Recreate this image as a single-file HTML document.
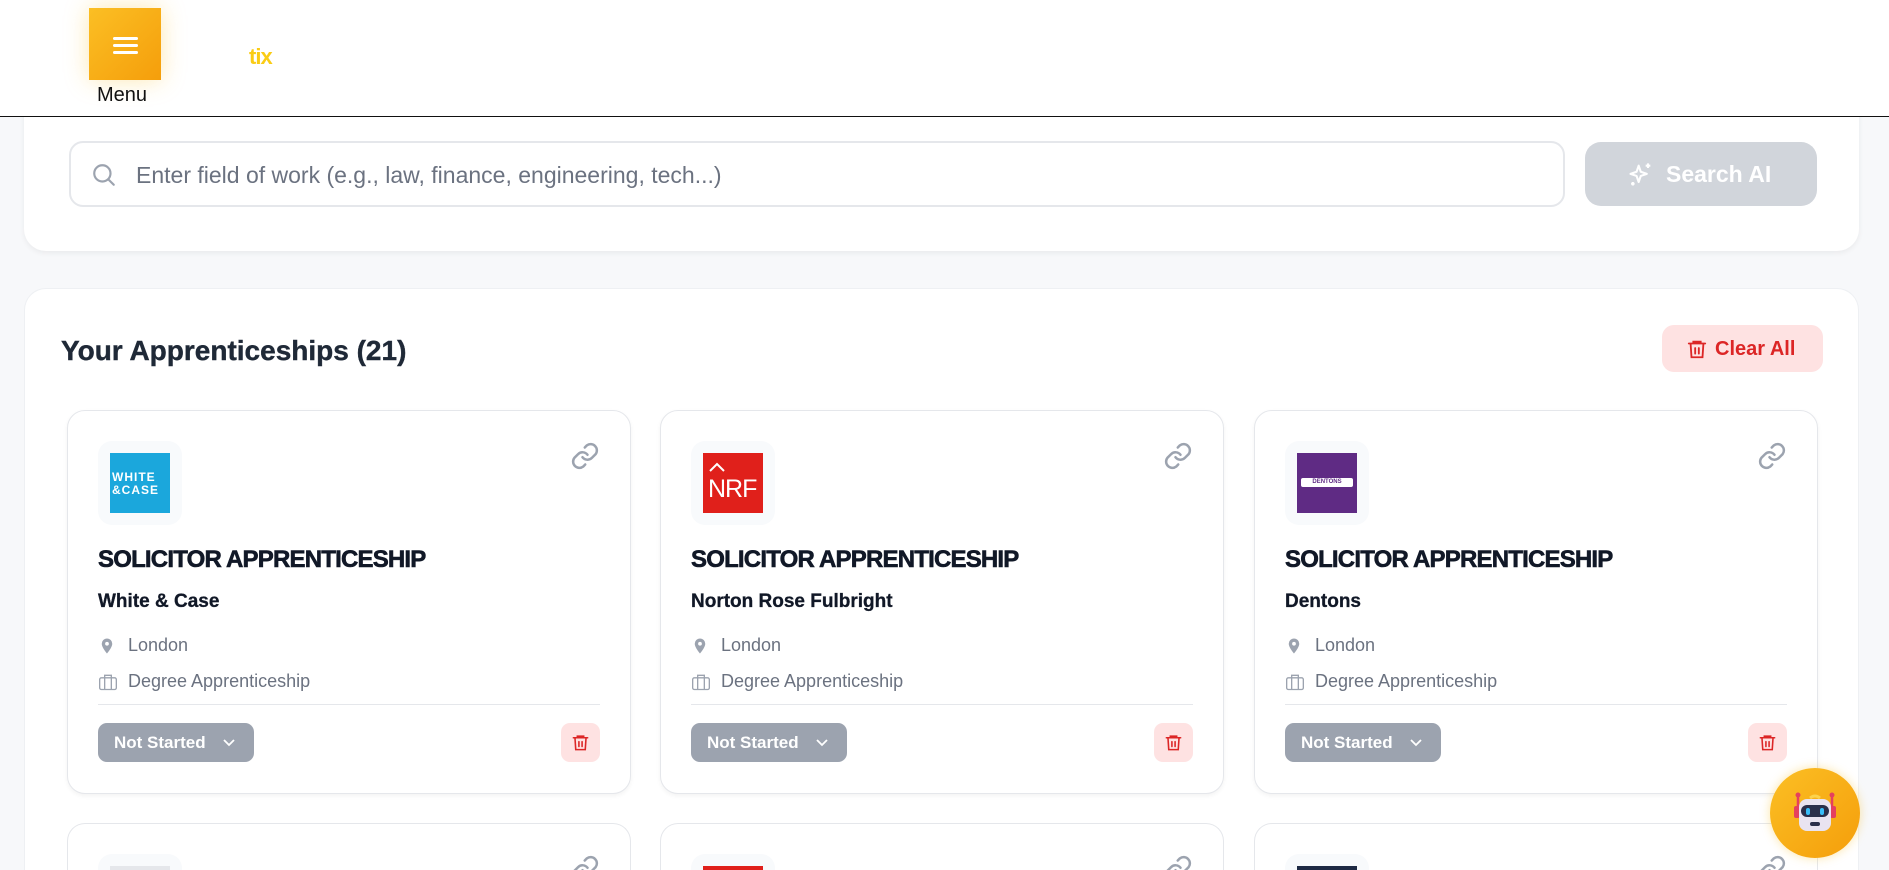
<!DOCTYPE html>
<html><head><meta charset="utf-8">
<style>
*{box-sizing:border-box;margin:0;padding:0}
html,body{width:1889px;height:870px;max-height:870px;overflow:hidden;background:#f7f8fa;font-family:"Liberation Sans",sans-serif}
#wrap{position:relative;width:1889px;height:870px;overflow:hidden}
.hdr{position:absolute;left:0;top:0;width:1889px;height:117px;background:#fff;border-bottom:1.5px solid #111;z-index:5}
.menu{position:absolute;left:89px;top:8px;width:72px;height:72px;background:linear-gradient(135deg,#fbbf24,#f59e0b);box-shadow:0 0 22px rgba(251,191,36,.35)}
.menu i{position:absolute;left:24px;width:25px;height:3px;background:#fff;border-radius:2px}
.mtxt{position:absolute;left:97px;top:84px;font-size:20px;color:#111}
.tix{position:absolute;left:249px;top:44px;font-size:22px;font-weight:bold;color:#facc15;letter-spacing:-1px}
.card1{position:absolute;left:24px;top:60px;width:1835px;height:191px;background:#fff;border-radius:22px;box-shadow:0 2px 6px rgba(0,0,0,.06)}
.inp{position:absolute;left:69px;top:141px;width:1496px;height:66px;border:2.5px solid #e5e7eb;border-radius:14px;background:#fff}
.inp span{position:absolute;left:65px;top:19px;font-size:23px;color:#6b7280}
.sai{position:absolute;left:1585px;top:142px;width:232px;height:64px;background:#d1d5db;border-radius:16px;color:#fff;font-weight:bold;font-size:23px}
.sai span{position:absolute;left:81px;top:19px}
.card2{position:absolute;left:24px;top:288px;width:1835px;height:582px;background:#fff;border-radius:22px 22px 0 0;border:1px solid #eef0f3;border-bottom:none}
.ttl{position:absolute;left:61px;top:335px;font-size:28px;font-weight:bold;color:#1f2937;-webkit-text-stroke:.4px #1f2937}
.clr{position:absolute;left:1662px;top:325px;width:161px;height:47px;background:#fee2e2;border-radius:12px;color:#dc2626;font-weight:bold;font-size:20px}
.clr span{position:absolute;left:53px;top:13px}
.c{position:absolute;width:564px;height:384px;background:#fff;border:1.5px solid #e5e7eb;border-radius:18px;box-shadow:0 2px 5px rgba(0,0,0,.05);overflow:hidden}
.c.r2{height:47px;border-bottom:none;border-radius:18px 18px 0 0;box-shadow:none}
.lb{position:absolute;left:30px;top:30px;width:84px;height:84px;background:#f8fafc;border-radius:14px}
.lg{position:absolute;left:12px;top:12px;width:60px;height:60px;overflow:hidden}
.r2 .lb{height:17px;border-radius:14px 14px 0 0}
.r2 .lg{height:5px}
.lk{position:absolute;right:30px;top:30px}
.t{position:absolute;left:30px;top:135px;font-size:24px;font-weight:bold;color:#111827;letter-spacing:-.8px;white-space:nowrap;-webkit-text-stroke:.6px #111827}
.co{position:absolute;left:30px;top:180px;font-size:19px;font-weight:bold;color:#111827;-webkit-text-stroke:.3px #111827}
.m{position:absolute;left:30px;font-size:18px;color:#6b7280}
.m svg{position:absolute;left:0;top:1px}
.m span{position:absolute;left:30px;top:0;white-space:nowrap}
.dv{position:absolute;left:30px;right:30px;top:293px;border-top:1.5px solid #e5e7eb}
.ns{position:absolute;left:30px;top:312px;width:156px;height:39px;background:#9ca3af;border-radius:9px;color:#fff;font-weight:bold;font-size:17px}
.ns span{position:absolute;left:16px;top:10px}
.ns svg{position:absolute;left:124px;top:14px}
.tr{position:absolute;right:30px;top:312px;width:39px;height:39px;background:#fee2e2;border-radius:9px}
.tr svg{position:absolute;left:10px;top:9px}
.bot{position:absolute;left:1770px;top:768px;width:90px;height:90px;border-radius:50%;background:linear-gradient(135deg,#fbbf24,#f59e0b);box-shadow:0 0 10px rgba(251,191,36,.4);z-index:6}
</style></head><body><div id="wrap">
<div class="hdr">
 <div class="menu"><i style="top:29px"></i><i style="top:36px"></i><i style="top:43px"></i></div>
 <div class="mtxt">Menu</div>
 <div class="tix">tix</div>
</div>
<div class="card1"></div>
<div class="inp">
 <svg style="position:absolute;left:20px;top:19px" width="26" height="26" viewBox="0 0 24 24" fill="none" stroke="#9ca3af" stroke-width="2" stroke-linecap="round"><circle cx="10.5" cy="10.5" r="7.5"/><path d="M16 16l5 5"/></svg>
 <span>Enter field of work (e.g., law, finance, engineering, tech...)</span>
</div>
<div class="sai"><svg style="position:absolute;left:42px;top:19px" width="28" height="28" viewBox="0 0 24 24" fill="none" stroke="#fff" stroke-width="1.8" stroke-linejoin="round"><path d="M10 4l1.8 5.2L17 11l-5.2 1.8L10 18l-1.8-5.2L3 11l5.2-1.8z"/><path d="M18 2v4M16 4h4M5 18v3M3.5 19.5h3"/></svg><span>Search AI</span></div>
<div class="card2"></div>
<div class="ttl">Your Apprenticeships (21)</div>
<div class="clr"><svg style="position:absolute;left:24px;top:13px" width="22" height="22" viewBox="0 0 24 24" fill="none" stroke="#dc2626" stroke-width="2" stroke-linecap="round"><path d="M3 6h18M8 6V4h8v2M5 6l1 15h12l1-15M10 11v6M14 11v6"/></svg><span>Clear All</span></div>

<div class="c" style="left:67px;top:410px">
 <div class="lb"><div class="lg" style="background:#1ba7dc;color:#fff;font-size:12px;font-weight:bold;letter-spacing:1px;line-height:13px;padding-top:18px;padding-left:2px">WHITE<br>&amp;CASE</div></div>
 <svg class="lk" width="30" height="30" viewBox="0 0 24 24" fill="none" stroke="#9ca3af" stroke-width="2" stroke-linecap="round"><path d="M10 13a5 5 0 0 0 7.5.5l3-3a5 5 0 0 0-7-7l-1.7 1.7"/><path d="M14 11a5 5 0 0 0-7.5-.5l-3 3a5 5 0 0 0 7 7l1.7-1.7"/></svg>
 <div class="t">SOLICITOR APPRENTICESHIP</div>
 <div class="co">White &amp; Case</div>
 <div class="m" style="top:224px"><svg width="18" height="20" viewBox="0 0 24 24" fill="#9ca3af"><path d="M12 2a7 7 0 0 0-7 7c0 5 7 13 7 13s7-8 7-13a7 7 0 0 0-7-7zm0 9.5a2.5 2.5 0 1 1 0-5 2.5 2.5 0 0 1 0 5z"/></svg><span>London</span></div>
 <div class="m" style="top:260px"><svg width="20" height="20" viewBox="0 0 24 24" fill="none" stroke="#9ca3af" stroke-width="1.6"><rect x="2" y="7" width="20" height="14" rx="2"/><path d="M8 7V4h8v3M8 7v14M16 7v14"/></svg><span>Degree Apprenticeship</span></div>
 <div class="dv"></div>
 <div class="ns"><span>Not Started</span><svg width="14" height="10" viewBox="0 0 14 10" fill="none" stroke="#fff" stroke-width="1.8"><path d="M2 3l5 5 5-5"/></svg></div>
 <div class="tr"><svg width="19" height="21" viewBox="0 0 24 24" fill="none" stroke="#dc2626" stroke-width="2" stroke-linecap="round"><path d="M3 6h18M8 6V4h8v2M5 6l1 15h12l1-15M10 11v6M14 11v6"/></svg></div>
</div>
<div class="c" style="left:660px;top:410px">
 <div class="lb"><div class="lg" style="background:#e0201b;color:#fff;font-size:25px;padding:22px 0 0 5px;letter-spacing:-1px"><svg style="position:absolute;left:6px;top:9px" width="16" height="10" viewBox="0 0 16 10" fill="none" stroke="#fff" stroke-width="2"><path d="M1 9l7-7 7 7"/></svg>NRF</div></div>
 <svg class="lk" width="30" height="30" viewBox="0 0 24 24" fill="none" stroke="#9ca3af" stroke-width="2" stroke-linecap="round"><path d="M10 13a5 5 0 0 0 7.5.5l3-3a5 5 0 0 0-7-7l-1.7 1.7"/><path d="M14 11a5 5 0 0 0-7.5-.5l-3 3a5 5 0 0 0 7 7l1.7-1.7"/></svg>
 <div class="t">SOLICITOR APPRENTICESHIP</div>
 <div class="co">Norton Rose Fulbright</div>
 <div class="m" style="top:224px"><svg width="18" height="20" viewBox="0 0 24 24" fill="#9ca3af"><path d="M12 2a7 7 0 0 0-7 7c0 5 7 13 7 13s7-8 7-13a7 7 0 0 0-7-7zm0 9.5a2.5 2.5 0 1 1 0-5 2.5 2.5 0 0 1 0 5z"/></svg><span>London</span></div>
 <div class="m" style="top:260px"><svg width="20" height="20" viewBox="0 0 24 24" fill="none" stroke="#9ca3af" stroke-width="1.6"><rect x="2" y="7" width="20" height="14" rx="2"/><path d="M8 7V4h8v3M8 7v14M16 7v14"/></svg><span>Degree Apprenticeship</span></div>
 <div class="dv"></div>
 <div class="ns"><span>Not Started</span><svg width="14" height="10" viewBox="0 0 14 10" fill="none" stroke="#fff" stroke-width="1.8"><path d="M2 3l5 5 5-5"/></svg></div>
 <div class="tr"><svg width="19" height="21" viewBox="0 0 24 24" fill="none" stroke="#dc2626" stroke-width="2" stroke-linecap="round"><path d="M3 6h18M8 6V4h8v2M5 6l1 15h12l1-15M10 11v6M14 11v6"/></svg></div>
</div>
<div class="c" style="left:1254px;top:410px">
 <div class="lb"><div class="lg" style="background:#5f2b84"><div style="position:absolute;left:4px;top:25px;width:52px;height:9px;background:#fff;border-radius:2px;color:#5f2b84;font-size:6px;font-weight:bold;text-align:center;line-height:9px">DENTONS</div></div></div>
 <svg class="lk" width="30" height="30" viewBox="0 0 24 24" fill="none" stroke="#9ca3af" stroke-width="2" stroke-linecap="round"><path d="M10 13a5 5 0 0 0 7.5.5l3-3a5 5 0 0 0-7-7l-1.7 1.7"/><path d="M14 11a5 5 0 0 0-7.5-.5l-3 3a5 5 0 0 0 7 7l1.7-1.7"/></svg>
 <div class="t">SOLICITOR APPRENTICESHIP</div>
 <div class="co">Dentons</div>
 <div class="m" style="top:224px"><svg width="18" height="20" viewBox="0 0 24 24" fill="#9ca3af"><path d="M12 2a7 7 0 0 0-7 7c0 5 7 13 7 13s7-8 7-13a7 7 0 0 0-7-7zm0 9.5a2.5 2.5 0 1 1 0-5 2.5 2.5 0 0 1 0 5z"/></svg><span>London</span></div>
 <div class="m" style="top:260px"><svg width="20" height="20" viewBox="0 0 24 24" fill="none" stroke="#9ca3af" stroke-width="1.6"><rect x="2" y="7" width="20" height="14" rx="2"/><path d="M8 7V4h8v3M8 7v14M16 7v14"/></svg><span>Degree Apprenticeship</span></div>
 <div class="dv"></div>
 <div class="ns"><span>Not Started</span><svg width="14" height="10" viewBox="0 0 14 10" fill="none" stroke="#fff" stroke-width="1.8"><path d="M2 3l5 5 5-5"/></svg></div>
 <div class="tr"><svg width="19" height="21" viewBox="0 0 24 24" fill="none" stroke="#dc2626" stroke-width="2" stroke-linecap="round"><path d="M3 6h18M8 6V4h8v2M5 6l1 15h12l1-15M10 11v6M14 11v6"/></svg></div>
</div>

<div class="c r2" style="left:67px;top:823px"><div class="lb"><div class="lg" style="background:#e5e7eb"></div></div><svg class="lk" width="30" height="17" viewBox="0 0 24 13.6" fill="none" stroke="#9ca3af" stroke-width="2" stroke-linecap="round"><path d="M10 13a5 5 0 0 0 7.5.5l3-3a5 5 0 0 0-7-7l-1.7 1.7"/><path d="M14 11a5 5 0 0 0-7.5-.5l-3 3"/></svg></div>
<div class="c r2" style="left:660px;top:823px"><div class="lb"><div class="lg" style="background:#e0201b"></div></div><svg class="lk" width="30" height="17" viewBox="0 0 24 13.6" fill="none" stroke="#9ca3af" stroke-width="2" stroke-linecap="round"><path d="M10 13a5 5 0 0 0 7.5.5l3-3a5 5 0 0 0-7-7l-1.7 1.7"/><path d="M14 11a5 5 0 0 0-7.5-.5l-3 3"/></svg></div>
<div class="c r2" style="left:1254px;top:823px"><div class="lb"><div class="lg" style="background:#1e2a44"></div></div><svg class="lk" width="30" height="17" viewBox="0 0 24 13.6" fill="none" stroke="#9ca3af" stroke-width="2" stroke-linecap="round"><path d="M10 13a5 5 0 0 0 7.5.5l3-3a5 5 0 0 0-7-7l-1.7 1.7"/><path d="M14 11a5 5 0 0 0-7.5-.5l-3 3"/></svg></div>

<div class="bot"><svg style="position:absolute;left:22px;top:22px" width="46" height="46" viewBox="0 0 46 46"><path d="M6 6v14M40 6v14" stroke="#e5405e" stroke-width="2.5"/><circle cx="6" cy="5" r="2.5" fill="#e5405e"/><circle cx="40" cy="5" r="2.5" fill="#e5405e"/><rect x="2" y="16" width="6" height="12" rx="2" fill="#e5405e"/><rect x="38" y="16" width="6" height="12" rx="2" fill="#e5405e"/><rect x="7" y="9" width="32" height="32" rx="8" fill="#e9e3f0"/><rect x="9" y="15" width="28" height="12" rx="6" fill="#2b2f4a"/><rect x="14" y="18" width="4" height="7" rx="2" fill="#38bdf8"/><rect x="28" y="18" width="4" height="7" rx="2" fill="#38bdf8"/><rect x="18" y="32" width="10" height="4" rx="2" fill="#2b2f4a"/><path d="M18 8q5-4 10 0" stroke="#fcd34d" stroke-width="3" fill="none"/></svg></div>
</div></body></html>
